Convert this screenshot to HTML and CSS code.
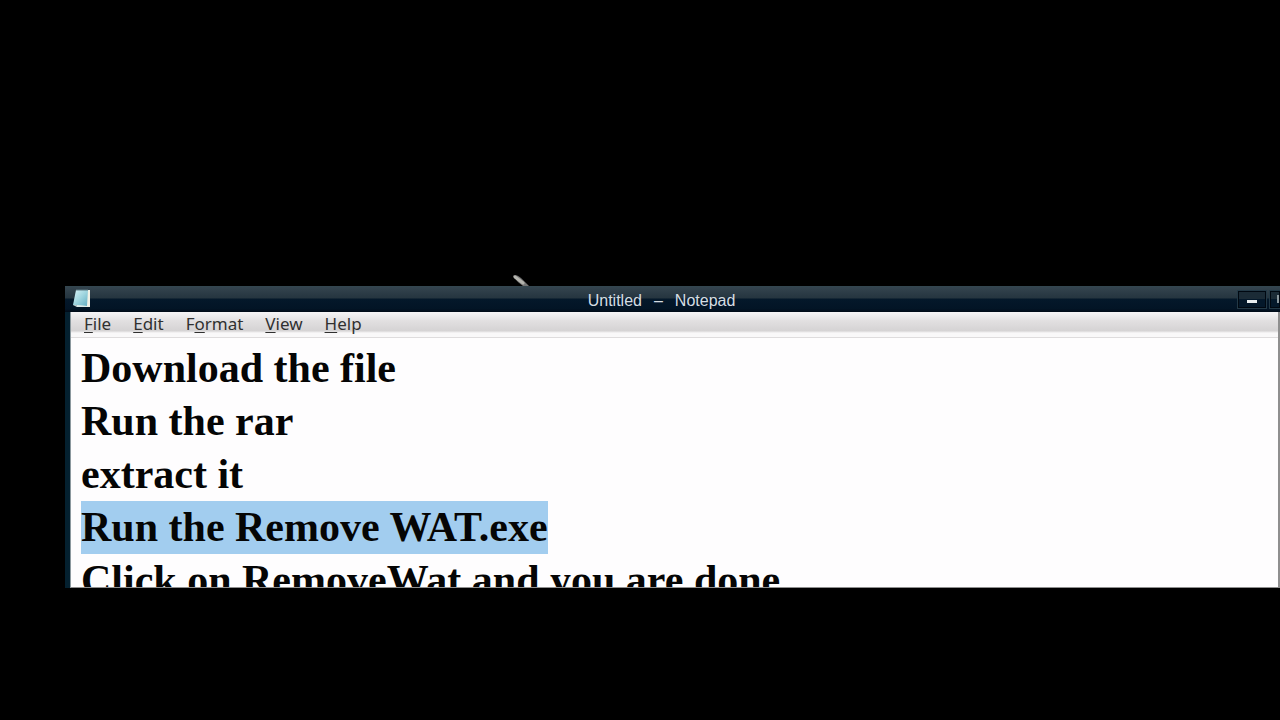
FILE: index.html
```html
<!DOCTYPE html>
<html lang="en">
<head>
    <meta charset="UTF-8">
    <meta name="viewport" content="width=device-width, initial-scale=1.0">
    <title>Untitled - Notepad</title>
    <link rel="stylesheet" href="styles.css">
</head>
<body>
    <div class="window">
        <svg class="pointer" width="18" height="12" viewBox="0 0 18 12">
            <path d="M0 2 Q2 -1 8 4 L16 12 L10 12 Q4 8 0 2Z" fill="#757575"/>
            <path d="M2 3 L10 9" stroke="#b4b4ae" stroke-width="3" stroke-linecap="round"/>
        </svg>
        <header class="title-bar">
            <svg class="app-icon" width="18" height="20" viewBox="0 0 18 20">
                <defs>
                    <linearGradient id="cover" x1="0" y1="0" x2="1" y2="1">
                        <stop offset="0" stop-color="#d9f3f6"/>
                        <stop offset="0.5" stop-color="#9fd5df"/>
                        <stop offset="1" stop-color="#62adc2"/>
                    </linearGradient>
                </defs>
                <path d="M4 1 H17 V18 H4Z" fill="#f1f1e6"/>
                <path d="M3 1 H15 L14 17 L0 16Z" fill="url(#cover)"/>
                <path d="M0 16 L14 17 L14 18 L4 18Z" fill="#dcebea"/>
                <path d="M4 0 V2 M6 0 V2 M8 0 V2 M10 0 V2 M12 0 V2 M14 0 V2" stroke="#5d7882" stroke-width="1"/>
            </svg>
            <div class="title">
                <span>Untitled</span>
                <span>–</span>
                <span>Notepad</span>
            </div>
            <div class="controls">
                <button class="control minimize" aria-label="Minimize"><span></span></button>
                <button class="control maximize" aria-label="Maximize"><span></span></button>
            </div>
        </header>
        <div class="client">
            <nav class="menu">
                <button><u>F</u>ile</button>
                <button><u>E</u>dit</button>
                <button>F<u>o</u>rmat</button>
                <button><u>V</u>iew</button>
                <button><u>H</u>elp</button>
            </nav>
            <textarea id="editor" class="editor" aria-label="Text editor" spellcheck="false" wrap="off">Download the file
Run the rar
extract it
Run the Remove WAT.exe
Click on RemoveWat and you are done</textarea>
        </div>
    </div>

    <script>
    const editor = document.getElementById("editor");
    const line = "Run the Remove WAT.exe";
    const start = editor.value.indexOf(line);

    editor.focus();
    editor.setSelectionRange(start, start + line.length);
    editor.scrollTop = 0;
    </script>
</body>
</html>
```

FILE: styles.css
```css
body {
    box-sizing: border-box;
    display: flex;
    height: 100vh;
    margin: 0;
    padding: 286px 0 132px 65px;
    background-color: #000;
    overflow: hidden;
}
.window {
    position: relative;
    display: flex;
    flex: 1;
    flex-direction: column;
    min-width: 0;
    background-color: #04202f;
}
.pointer {
    position: absolute;
    left: 448px;
    top: -12px;
}

/* Title bar */
.title-bar {
    display: flex;
    align-items: center;
    height: 26px;
    padding-left: 8px;
    border-top: 1px solid #33464f;
    box-sizing: border-box;
    background: linear-gradient(#34444f, #25353f 44%, #04182a 48%, #021425 88%, #000a16);
}
.app-icon {
    padding-bottom: 2px;
}
.title {
    display: flex;
    flex: 1;
    justify-content: center;
    gap: 12px;
    padding: 3px 6px 0 0;
    color: #d5dde2;
    font: 16px/18px "Liberation Sans", Arial, sans-serif;
}
.controls {
    display: flex;
    gap: 4px;
}
.control {
    display: flex;
    align-items: flex-end;
    justify-content: center;
    box-sizing: border-box;
    width: 28px;
    height: 17px;
    padding: 0 0 4px;
    border: 1px solid #000811;
    outline: 1px solid #233946;
    background: linear-gradient(#1b2b36 45%, #04182a 50%);
}
.maximize {
    width: 10px;
    justify-content: flex-end;
}
.minimize span {
    width: 10px;
    height: 3px;
    background-color: #e8eef0;
}
.maximize span {
    width: 2px;
    height: 8px;
    background-color: #8b989e;
}

/* Menu and text area */
.client {
    display: flex;
    flex: 1;
    flex-direction: column;
    min-height: 0;
    margin-left: 5px;
    border-left: 1px solid #8b989e;
    border-right: 2px solid #8f8f8f;
    border-bottom: 1px solid #8f8f8f;
    background-color: #fefdfe;
}
.menu {
    display: flex;
    align-items: flex-start;
    gap: 22px;
    height: 25px;
    padding-left: 13px;
    border-bottom: 1px solid #dedcdd;
    background: linear-gradient(#f6f5f6, #e2e0e1 35%, #d5d3d4 75%, #f9f8f9 84%);
}
.menu button {
    padding: 0;
    border: none;
    background: none;
    color: #303030;
    font: 17px/23px "Noto Sans", "Open Sans", sans-serif;
}
.menu u {
    text-underline-offset: 2px;
}
.editor {
    flex: 1;
    min-height: 0;
    margin: 0;
    padding: 4px 10px 0;
    border: none;
    outline: none;
    resize: none;
    overflow: hidden;
    background-color: #fefdfe;
    color: #050505;
    font: bold 42px/53px "Palatino Linotype", Palatino, "Liberation Serif", serif;
}
.editor::selection {
    background-color: #a2cdef;
    color: #050505;
}
```
